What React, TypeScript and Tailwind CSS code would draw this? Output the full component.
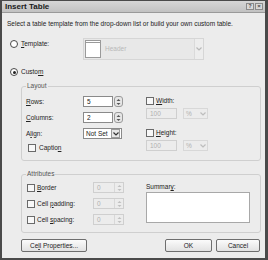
import React from 'react';

const font = { fontFamily: '"Liberation Sans", Arial, sans-serif' };

function U({ children }: { children: React.ReactNode }) {
  return <span className="underline underline-offset-1">{children}</span>;
}

function Radio({ checked }: { checked?: boolean }) {
  return (
    <span className="w-[8px] h-[8px] rounded-full border border-[#4a4a4a] bg-white flex items-center justify-center shrink-0">
      {checked && <span className="w-[3px] h-[3px] rounded-full bg-[#222]" />}
    </span>
  );
}

function Check() {
  return <span className="w-[8px] h-[8px] border border-[#6a6a6a] bg-[#f8f8f8] shrink-0" />;
}

function Chevron({ color }: { color: string }) {
  return (
    <svg width="6" height="4" viewBox="0 0 6 4">
      <path d="M0.5 0.5 L3 3 L5.5 0.5" fill="none" stroke={color} strokeWidth="1.2" />
    </svg>
  );
}

function SpinArrows({ color }: { color: string }) {
  return (
    <svg width="5" height="8" viewBox="0 0 5 8">
      <path d="M0.5 3 L2.5 1 L4.5 3 Z" fill={color} />
      <path d="M0.5 5 L2.5 7 L4.5 5 Z" fill={color} />
    </svg>
  );
}

function Spin({ value }: { value: string }) {
  return (
    <div className="flex h-[11px] items-center">
      <div className="w-[30px] h-[11px] border border-[#8a8a8a] bg-white pl-[3px] flex items-center text-[#222]">{value}</div>
      <div className="w-[9px] h-[11px] ml-[1px] rounded-[3px] border border-[#9a9a9a] bg-[#e6e6e6] flex items-center justify-center">
        <SpinArrows color="#555" />
      </div>
    </div>
  );
}

function DisabledSpin() {
  return (
    <div className="w-[31px] h-[11px] border border-[#cfcfcf] bg-[#ececec] flex items-center text-[#b0b0b0]">
      <span className="flex-1 pl-[3px]">0</span>
      <span className="w-[9px] h-full border-l border-[#d8d8d8] flex items-center justify-center">
        <SpinArrows color="#c0c0c0" />
      </span>
    </div>
  );
}

function Button({ label, w }: { label: React.ReactNode; w: string }) {
  return (
    <div className={`${w} h-[13px] rounded-[2px] border border-[#6e6e6e] bg-gradient-to-b from-[#fbfbfb] to-[#e2e2e2] flex items-center justify-center text-[#222]`}>
      {label}
    </div>
  );
}

export default function App() {
  return (
    <div style={font} className="w-[268px] h-[260px] bg-[#505050] border-t-[1px] border-l-[2px] border-r-[3px] border-b-[2px] border-[#4a4a4a] flex flex-col text-[6.5px] leading-[8px] text-[#222] overflow-hidden">
      {/* Title bar */}
      <div className="h-[12px] bg-gradient-to-b from-[#d6d6d6] to-[#c2c2c2] flex items-center pl-[3px] pr-[2px] border-b border-[#9a9a9a]">
        <span className="text-[8px] font-bold text-[#1a1a1a] leading-[10px]">Insert Table</span>
        <div className="ml-auto flex gap-[1px]">
          <span className="w-[8px] h-[7px] border border-[#8a8a8a] bg-[#d8d8d8] text-[5px] leading-[5px] font-bold text-[#444] flex items-center justify-center">?</span>
          <span className="w-[8px] h-[7px] border border-[#8a8a8a] bg-[#d8d8d8] text-[6px] leading-[5px] font-bold text-[#444] flex items-center justify-center">×</span>
        </div>
      </div>

      {/* Body */}
      <div className="flex-1 bg-[#ececec] pl-[5px] flex flex-col">
        <div className="mt-[7px] h-[8px] whitespace-nowrap">Select a table template from the drop-down list or build your own custom table.</div>

        {/* Template row */}
        <div className="mt-[10px] flex items-start">
          <div className="ml-[3px] mt-[2px] flex items-center gap-[3px] w-[73px]">
            <Radio />
            <span><U>T</U>emplate:</span>
          </div>
          <div className="w-[121px] h-[22px] border border-[#d6d6d6] bg-[#e8e8e8] flex items-center">
            <div className="ml-[1px] w-[16px] h-[18px] border border-[#9a9a9a] bg-white flex flex-col">
              <div className="h-[2px] border-b border-[#9a9a9a]" />
            </div>
            <span className="ml-[4px] text-[#b8b8b8]">Header</span>
            <div className="ml-auto w-[9px] h-full border-l border-[#dadada] bg-[#ededed] flex items-center justify-center">
              <Chevron color="#b8b8b8" />
            </div>
          </div>
        </div>

        {/* Custom row */}
        <div className="mt-[8px] ml-[3px] flex items-center gap-[3px] h-[8px]">
          <Radio checked />
          <span>Custo<U>m</U></span>
        </div>

        {/* Layout */}
        <fieldset className="mt-[6px] ml-[14px] w-[240px] border border-[#cfcfcf] rounded-[3px] px-[4px] pb-[8px]">
          <legend className="px-[1px] leading-[8px] text-[#555]">Layout</legend>
          <div className="flex mt-[6px]">
            <div className="w-[120px] flex flex-col gap-[5px]">
              <div className="flex items-center h-[11px]">
                <span className="w-[57px]"><U>R</U>ows:</span>
                <Spin value="5" />
              </div>
              <div className="flex items-center h-[11px]">
                <span className="w-[57px]"><U>C</U>olumns:</span>
                <Spin value="2" />
              </div>
              <div className="flex items-center h-[11px]">
                <span className="w-[57px]">A<U>l</U>ign:</span>
                <div className="w-[39px] h-[11px] border border-[#8a8a8a] bg-white flex items-center">
                  <span className="flex-1 pl-[2px]">Not Set</span>
                  <span className="w-[9px] h-[9px] mr-[1px] border border-[#9a9a9a] bg-[#e6e6e6] flex items-center justify-center">
                    <Chevron color="#333" />
                  </span>
                </div>
              </div>
              <div className="flex items-center h-[8px] ml-[2px] gap-[3px]">
                <Check />
                <span>Captio<U>n</U></span>
              </div>
            </div>
            <div className="flex flex-col">
              <div className="flex items-center h-[8px] mt-[1px] gap-[2px]">
                <Check />
                <span><U>W</U>idth:</span>
              </div>
              <div className="flex mt-[3px] gap-[6px]">
                <div className="w-[31px] h-[11px] border border-[#cfcfcf] bg-[#ececec] pl-[3px] flex items-center text-[#b0b0b0]">100</div>
                <div className="w-[25px] h-[11px] border border-[#d8d8d8] bg-[#ececec] flex items-center text-[#b0b0b0]">
                  <span className="flex-1 pl-[2px]">%</span>
                  <span className="w-[9px] h-full flex items-center justify-center"><Chevron color="#bdbdbd" /></span>
                </div>
              </div>
              <div className="flex items-center h-[8px] mt-[10px] gap-[2px]">
                <Check />
                <span><U>H</U>eight:</span>
              </div>
              <div className="flex mt-[3px] gap-[6px]">
                <div className="w-[31px] h-[11px] border border-[#cfcfcf] bg-[#ececec] pl-[3px] flex items-center text-[#b0b0b0]">100</div>
                <div className="w-[25px] h-[11px] border border-[#d8d8d8] bg-[#ececec] flex items-center text-[#b0b0b0]">
                  <span className="flex-1 pl-[2px]">%</span>
                  <span className="w-[9px] h-full flex items-center justify-center"><Chevron color="#bdbdbd" /></span>
                </div>
              </div>
            </div>
          </div>
        </fieldset>

        {/* Attributes */}
        <fieldset className="mt-[9px] ml-[14px] w-[240px] border border-[#cfcfcf] rounded-[3px] px-[4px] pb-[7px]">
          <legend className="px-[1px] leading-[8px] text-[#555]">Attributes</legend>
          <div className="flex mt-[4px]">
            <div className="w-[120px] flex flex-col gap-[5px]">
              {[
                <span key="b"><U>B</U>order</span>,
                <span key="p">Cell <U>p</U>adding:</span>,
                <span key="s">Cell <U>s</U>pacing:</span>,
              ].map((label, idx) => (
                <div key={idx} className="flex items-center h-[11px]">
                  <div className="w-[66px] flex items-center gap-[2px] ml-[1px]">
                    <Check />
                    {label}
                  </div>
                  <DisabledSpin />
                </div>
              ))}
            </div>
            <div className="flex flex-col">
              <div className="h-[8px] mt-[1px]">Summar<U>y</U>:</div>
              <div className="mt-[1px] w-[104px] h-[31px] border border-[#a8a8a8] bg-white" />
            </div>
          </div>
        </fieldset>

        {/* Buttons */}
        <div className="mt-[6px] ml-[14px] w-[240px] flex">
          <Button w="w-[66px]" label={<span>Ce<U>l</U>l Properties...</span>} />
          <div className="ml-auto flex gap-[4px] mr-[1px]">
            <Button w="w-[47px]" label="OK" />
            <Button w="w-[44px]" label="Cancel" />
          </div>
        </div>
      </div>
    </div>
  );
}
